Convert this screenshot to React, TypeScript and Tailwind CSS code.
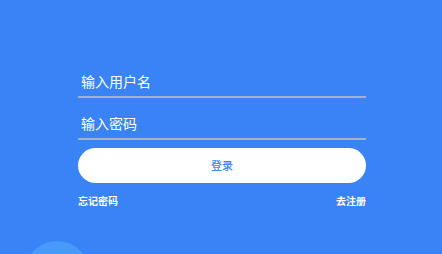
export default function App() {
  return (
    <div
      className="relative h-[254px] w-[442px] overflow-hidden bg-[#3a83f6]"
      style={{ fontFamily: '"Noto Sans CJK SC", "Noto Sans", sans-serif' }}
    >
      <div className="ml-[78px] flex w-[288px] flex-col pt-[66px]">
        <input
          placeholder="输入用户名"
          className="h-[32px] border-b-2 border-[#a5b1c6] bg-transparent px-[3px] text-[14px] text-white outline-none placeholder:text-white"
        />
        <input
          type="password"
          placeholder="输入密码"
          className="mt-[10px] h-[32px] border-b-2 border-[#a5b1c6] bg-transparent px-[3px] text-[14px] text-white outline-none placeholder:text-white"
        />
        <button className="mt-[8px] h-[35px] rounded-full bg-white text-[11px] font-medium text-[#3f86e8]">
          登录
        </button>
        <div className="mt-[11px] flex items-center justify-between text-[10px] font-bold leading-[14px] text-white">
          <span>忘记密码</span>
          <span>去注册</span>
        </div>
      </div>
      <div className="absolute left-[24px] top-[241px] h-[66px] w-[66px] rounded-full bg-[#4799fa]" />
    </div>
  );
}
